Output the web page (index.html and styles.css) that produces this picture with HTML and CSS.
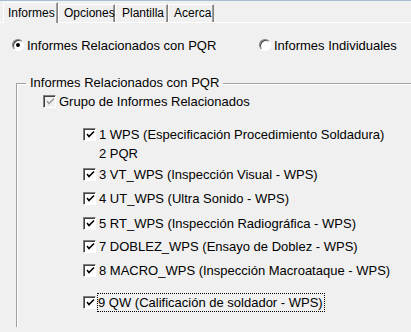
FILE: index.html
```html
<!DOCTYPE html>
<html lang="es">
<head>
  <meta charset="UTF-8">
  <title>Informes</title>
  <link rel="stylesheet" href="styles.css">
</head>
<body>
  <div class="tabs">
    <div class="tab activo">Informes</div>
    <div class="tab">Opciones</div>
    <div class="tab">Plantilla</div>
    <div class="tab">Acerca</div>
  </div>

  <div class="panel">
    <div class="radios">
      <label class="radio uno"><span class="circulo marcado"></span>Informes Relacionados con PQR</label>
      <label class="radio dos"><span class="circulo"></span>Informes Individuales</label>
    </div>

    <fieldset class="grupo">
      <legend>Informes Relacionados con PQR</legend>
      <div class="fila grupo-fila"><span class="caja gris"><svg width="9" height="9" viewBox="0 0 9 9"><path d="M1 4 L3 6.5 L8 1.5" fill="none" stroke="#a0a0a0" stroke-width="1.6"/></svg></span>Grupo de Informes Relacionados</div>
      <div class="lista">
        <div class="fila f1"><span class="caja"><svg width="9" height="9" viewBox="0 0 9 9"><path d="M1 4 L3 6.5 L8 1.5" fill="none" stroke="#000" stroke-width="1.6"/></svg></span>1 WPS (Especificación Procedimiento Soldadura)</div>
        <div class="fila f2 sin-caja">2 PQR</div>
        <div class="fila f3"><span class="caja"><svg width="9" height="9" viewBox="0 0 9 9"><path d="M1 4 L3 6.5 L8 1.5" fill="none" stroke="#000" stroke-width="1.6"/></svg></span>3 VT_WPS (Inspección Visual - WPS)</div>
        <div class="fila f4"><span class="caja"><svg width="9" height="9" viewBox="0 0 9 9"><path d="M1 4 L3 6.5 L8 1.5" fill="none" stroke="#000" stroke-width="1.6"/></svg></span>4 UT_WPS (Ultra Sonido - WPS)</div>
        <div class="fila f5"><span class="caja"><svg width="9" height="9" viewBox="0 0 9 9"><path d="M1 4 L3 6.5 L8 1.5" fill="none" stroke="#000" stroke-width="1.6"/></svg></span>5 RT_WPS (Inspección Radiográfica - WPS)</div>
        <div class="fila f7"><span class="caja"><svg width="9" height="9" viewBox="0 0 9 9"><path d="M1 4 L3 6.5 L8 1.5" fill="none" stroke="#000" stroke-width="1.6"/></svg></span>7 DOBLEZ_WPS (Ensayo de Doblez - WPS)</div>
        <div class="fila f8"><span class="caja"><svg width="9" height="9" viewBox="0 0 9 9"><path d="M1 4 L3 6.5 L8 1.5" fill="none" stroke="#000" stroke-width="1.6"/></svg></span>8 MACRO_WPS (Inspección Macroataque - WPS)</div>
        <div class="fila f9"><span class="caja"><svg width="9" height="9" viewBox="0 0 9 9"><path d="M1 4 L3 6.5 L8 1.5" fill="none" stroke="#000" stroke-width="1.6"/></svg></span><span class="foco">9 QW (Calificación de soldador - WPS)</span></div>
      </div>
    </fieldset>
  </div>
</body>
</html>
```

FILE: styles.css
```css
body {
  margin: 0;
  background-color: #f0f0f0;
  font-family: 'Liberation Sans', Arial, sans-serif;
  font-size: 13px;
  color: #000;
  overflow: hidden;
  height: 332px;
  border-top: 1px solid #a9bdd6;
  box-sizing: border-box;
}

.tabs {
  display: flex;
  align-items: flex-end;
  height: 21px;
  padding-left: 3px;
  border-bottom: 1px solid #fff;
}

.tab {
  font-size: 12px;
  height: 17px;
  line-height: 17px;
  padding: 0 5px;
  border-top: 1px solid #fff;
  border-left: 1px solid #fff;
  border-right: 1px solid #808080;
  box-shadow: inset -1px 0 0 #a0a0a0;
}

.tab.activo {
  height: 20px;
  line-height: 20px;
  padding: 0 4px;
  margin-bottom: -1px;
  background-color: #f0f0f0;
  width: 45px;
}

.tab:nth-child(2) { width: 45px; }
.tab:nth-child(3) { width: 40px; padding-left: 6px; }
.tab:nth-child(4) { width: 34px; padding-left: 5px; }

.radios {
  display: flex;
  height: 24px;
  margin-top: 10px;
  align-items: center;
}

.radio {
  display: flex;
  align-items: center;
}

.radio.uno { margin-left: 12px; width: 247px; }

.circulo {
  width: 10px;
  height: 10px;
  border-radius: 50%;
  background-color: #fff;
  border: 1px solid;
  border-color: #808080 #fff #fff #808080;
  box-shadow: inset 1px 1px 0 #404040;
  margin-right: 3px;
  position: relative;
  box-sizing: content-box;
}

.circulo.marcado::after {
  content: "";
  position: absolute;
  left: 3px;
  top: 3px;
  width: 4px;
  height: 4px;
  border-radius: 50%;
  background-color: #000;
}

.grupo {
  margin: 19px 0 0 16px;
  padding: 0;
  height: 250px;
  border: 1px solid #a0a0a0;
  border-right: none;
  border-bottom: none;
  box-shadow: inset 1px 1px 0 #fff;
}

.grupo legend {
  padding: 0 4px;
  margin-left: 9px;
  line-height: 14px;
}

.fila {
  display: flex;
  align-items: center;
  height: 20px;
  white-space: nowrap;
}

.grupo-fila {
  margin-left: 26px;
  margin-top: 1px;
}

.lista {
  margin-left: 66px;
}

.caja {
  background-color: #fff;
  border-top: 1px solid #808080;
  border-left: 1px solid #808080;
  border-right: 1px solid #fff;
  border-bottom: 1px solid #fff;
  box-shadow: inset 1px 1px 0 #404040;
  margin-right: 3px;
  display: flex;
  align-items: center;
  justify-content: center;
  box-sizing: border-box;
  width: 13px;
  height: 13px;
}

.caja svg { margin: 1px 0 0 1px; }

.caja.gris {
  background-color: #f0f0f0;
}

.sin-caja { padding-left: 16px; }

.f1 { margin-top: 13px; }
.f2 { margin-top: -1px; }
.f3 { margin-top: 1px; }
.f4 { margin-top: 4px; }
.f5 { margin-top: 5px; }
.f7 { margin-top: 3px; }
.f8 { margin-top: 4px; }
.f9 { margin-top: 12px; }

.foco {
  outline: 1px dotted #000;
  padding: 1px 1px 1px 0;
  margin-left: -1px;
}
```
